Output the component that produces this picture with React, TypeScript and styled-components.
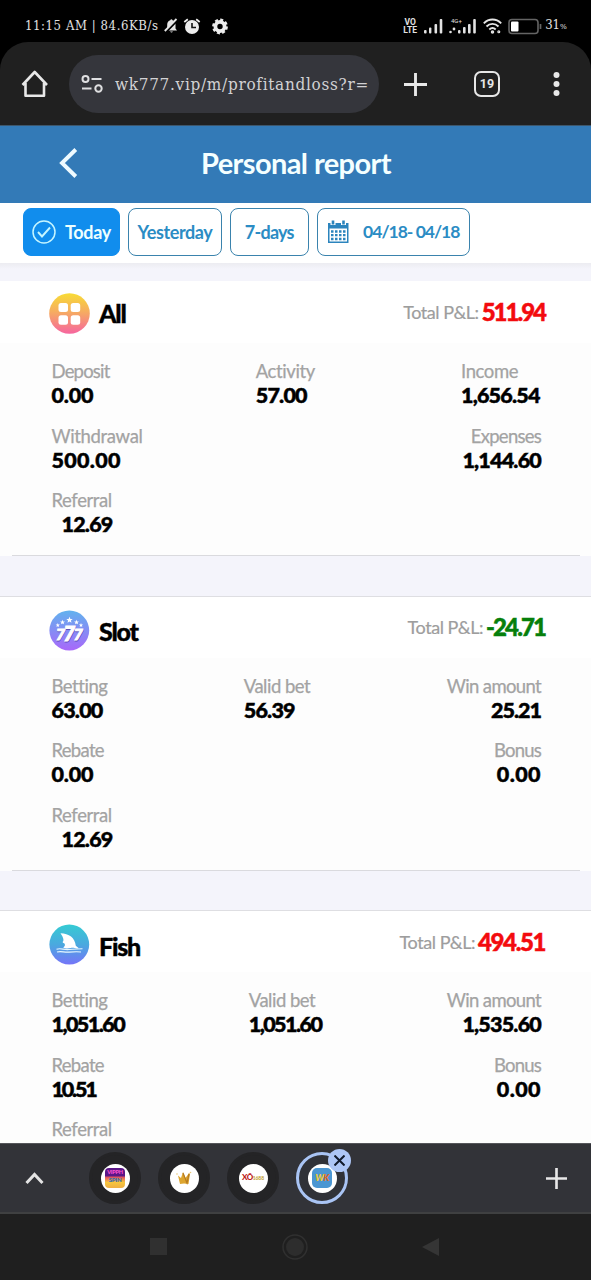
import React from "react";
import styled, { createGlobalStyle } from "styled-components";

const GlobalStyle = createGlobalStyle`
  * { box-sizing: border-box; }
  body { margin: 0; background: #000; font-family: Lato, "Open Sans", sans-serif; }
`;

const Screen = styled.div`
  width: 591px;
  height: 1280px;
  display: flex;
  flex-direction: column;
  overflow: hidden;
  background: #000;
`;

const StatusBar = styled.div`
  height: 42px;
  flex: none;
  display: flex;
  align-items: center;
  justify-content: space-between;
  padding: 10px 24px 0 25px;
  color: #e2e2e2;
`;

const StatusGroup = styled.div<{ $gap: number }>`
  display: flex;
  align-items: center;
  gap: ${(p) => p.$gap}px;
`;

const StatusText = styled.span<{ $track: number }>`
  font: 13px/18px "DejaVu Serif Condensed", "DejaVu Serif", serif;
  font-stretch: condensed;
  white-space: pre;
  letter-spacing: ${(p) => p.$track}px;
`;

const BatteryLevel = styled(StatusText)`
  margin-left: -3px;
`;

const Percent = styled.span`
  font-size: 8px;
`;

const VoLte = styled.span`
  display: flex;
  flex-direction: column;
  align-items: center;
  font: 700 8.5px/8.5px Roboto, sans-serif;
  width: 16px;
`;

const BrowserBar = styled.div`
  height: 83px;
  flex: none;
  display: flex;
  align-items: center;
  padding: 1px 0 0 21px;
  background: #202020;
  border-radius: 28px 28px 0 0;
`;

const UrlPill = styled.div`
  width: 310px;
  height: 58px;
  flex: none;
  margin: 0 25px 0 20px;
  padding-left: 12px;
  border-radius: 29px;
  background: #35363c;
  display: flex;
  align-items: center;
  gap: 11px;
`;

const Url = styled.span`
  font: 17px/24px "DejaVu Serif Condensed", "DejaVu Serif", serif;
  font-stretch: condensed;
  letter-spacing: 0.7px;
  color: #d2d2d4;
  white-space: nowrap;
`;

const TabCount = styled.div`
  width: 26px;
  height: 26px;
  flex: none;
  margin: 0 39px 0 47px;
  border: 2.6px solid #e6e6e6;
  border-radius: 7px;
  color: #e6e6e6;
  font: 700 12.5px/21px Roboto, sans-serif;
  text-align: center;
`;

const PageHeader = styled.header`
  height: 78px;
  flex: none;
  display: grid;
  grid-template-columns: 135px 322px 1fr;
  align-items: center;
  justify-items: center;
  padding-bottom: 4px;
  background: #337ab7;
  border-top: 1px solid #3d566b;
`;

const Title = styled.h1`
  margin: 0;
  font-size: 29px;
  line-height: 36px;
  font-weight: 700;
  letter-spacing: -0.6px;
  color: #f4ffff;
  white-space: nowrap;
`;

const Filters = styled.div`
  height: 60px;
  flex: none;
  display: flex;
  align-items: flex-start;
  gap: 8px;
  padding: 5px 23px 0;
  background: #fff;
`;

const FilterButton = styled.button<{
  $width: number;
  $active?: boolean;
  $gap?: number;
  $track?: number;
  $size?: number;
}>`
  width: ${(p) => p.$width}px;
  height: 48px;
  padding: 0;
  display: flex;
  align-items: center;
  justify-content: center;
  gap: ${(p) => p.$gap ?? 0}px;
  border: 1.3px solid ${(p) => (p.$active ? "#118ded" : "#3a83ad")};
  border-radius: 8px;
  background: ${(p) => (p.$active ? "#118ded" : "#fff")};
  color: ${(p) => (p.$active ? "#edffff" : "#2b8cc4")};
  font: 700 ${(p) => p.$size ?? 18}px/24px Lato, sans-serif;
  letter-spacing: ${(p) => p.$track ?? 0}px;
  white-space: nowrap;
`;

const Report = styled.main`
  height: 880px;
  flex: none;
  padding-top: 18px;
  overflow: hidden;
  background: linear-gradient(#ececf1, #f4f4fb 6px);
`;

const Card = styled.section`
  height: 275px;
  margin-bottom: 39.5px;
  background: #fdfdfd;
  border-top: 1px solid #dedee2;
  &:first-child { border-top-color: #fff; }
`;

const CardHead = styled.div<{ $lift?: boolean }>`
  height: 61px;
  display: flex;
  align-items: center;
  padding: ${(p) => (p.$lift ? 2 : 6)}px 46px 0 49px;
  background: #fff;
`;

const CardTitle = styled.h2<{ $lift?: boolean }>`
  flex: 1;
  margin: ${(p) => (p.$lift ? -2 : 2)}px 0 0 9px;
  font-size: 25px;
  line-height: 30px;
  font-weight: 900;
  letter-spacing: -1.2px;
  color: #000;
  -webkit-text-stroke: 0.4px #000;
`;

const Total = styled.div<{ $lift?: boolean }>`
  display: flex;
  align-items: center;
  gap: 3px;
  margin-bottom: ${(p) => (p.$lift ? 3 : 6)}px;
  color: #9d9d9d;
  font-size: 18px;
  line-height: 28px;
  letter-spacing: -0.45px;
  white-space: nowrap;
  -webkit-text-stroke: 0.2px #9d9d9d;
`;

const Amount = styled.strong<{ $gain: boolean; $track: number }>`
  font-size: 24px;
  font-weight: 900;
  letter-spacing: ${(p) => p.$track}px;
  color: ${(p) => (p.$gain ? "#f30b0e" : "#067f0b")};
  -webkit-text-stroke: 0.5px ${(p) => (p.$gain ? "#f30b0e" : "#067f0b")};
`;

const CardBody = styled.div`
  height: 213px;
  margin: 0 11px 0 12px;
  padding: 16px 39px 0 39.5px;
  border-bottom: 1px solid #dadade;
`;

const Row = styled.div`
  height: 64.5px;
  display: flex;
  justify-content: space-between;
`;

const Cell = styled.div<{ $width: number; $right?: boolean }>`
  width: ${(p) => p.$width}px;
  display: flex;
  flex-direction: column;
  align-items: ${(p) => (p.$right ? "flex-end" : "flex-start")};
  white-space: nowrap;
`;

const Label = styled.div<{ $track: number }>`
  height: 24px;
  font-size: 18.5px;
  line-height: 24px;
  letter-spacing: ${(p) => p.$track}px;
  color: #a3a3a3;
  -webkit-text-stroke: 0.25px #a3a3a3;
`;

const Value = styled.div<{ $indent?: boolean; $track: number }>`
  height: 24px;
  padding-left: ${(p) => (p.$indent ? 10 : 0)}px;
  font-size: 21.5px;
  line-height: 24px;
  font-weight: 900;
  letter-spacing: ${(p) => p.$track}px;
  color: #000;
  -webkit-text-stroke: 0.5px #000;
`;

const TabStrip = styled.div`
  height: 71px;
  flex: none;
  display: flex;
  align-items: center;
  padding: 0 24px 0 24px;
  background: #323338;
  border-top: 1px solid #55565a;
  border-bottom: 2px solid #3f4041;
`;

const TabList = styled.div`
  flex: 1;
  display: flex;
  gap: 17px;
  margin-left: 44px;
`;

const TabBubble = styled.div<{ $selected?: boolean }>`
  position: relative;
  width: 52px;
  height: 52px;
  display: grid;
  place-items: center;
  border-radius: 50%;
  border: 3px solid ${(p) => (p.$selected ? "#a9c4f4" : "#242426")};
  background: ${(p) => (p.$selected ? "#303238" : "#242426")};
`;

const Favicon = styled.div`
  width: 29px;
  height: 29px;
  display: grid;
  place-items: center;
  border-radius: 50%;
  background: #fff;
`;

const PromoIcon = styled.div`
  width: 20px;
  height: 20px;
  border-radius: 4px;
  display: flex;
  flex-direction: column;
  align-items: center;
  background: linear-gradient(#5b1687 0 38%, #e65c5c 48%, #f6c63e 72%, #efaf43);
  color: #ff54d0;
  font: 900 5.5px/8px Lato, sans-serif;
  letter-spacing: -0.2px;
`;

const PromoLower = styled.span`
  color: #2c6fb4;
  font-size: 6px;
  line-height: 7px;
`;

const XoLogo = styled.span`
  font: 900 8px/9px Lato, sans-serif;
  letter-spacing: -0.5px;
  color: #bd2118;
  white-space: nowrap;
`;

const XoTail = styled.span`
  font-size: 5px;
  letter-spacing: -0.1px;
  color: #c4a33b;
`;

const WkLogo = styled.div`
  width: 20px;
  height: 20px;
  border-radius: 5px;
  background: #4b96d2;
  color: #f6cb32;
  font: italic 900 9px/20px Lato, sans-serif;
  text-align: center;
  letter-spacing: -0.5px;
`;

const WkTail = styled.span`
  color: #e56a20;
`;

const CloseBadge = styled.div`
  position: absolute;
  top: -6px;
  right: -6px;
  width: 23px;
  height: 23px;
  display: grid;
  place-items: center;
  border-radius: 50%;
  background: #adc6f6;
`;

const NavBar = styled.nav`
  flex: 1;
  display: flex;
  align-items: center;
  justify-content: space-between;
  padding: 0 152px 1px 150px;
  background: #1f1f1f;
`;

const Icon = styled.svg`
  display: block;
  flex: none;
`;

const SingleSignal = () => (
  <Icon width="19" height="18" viewBox="0 0 19 18" fill="#e2e2e2">
    <rect x="0" y="13" width="2.6" height="3.4" rx="1" />
    <rect x="5" y="10.5" width="2.4" height="5.9" rx="1" />
    <rect x="10.5" y="7" width="2.6" height="9.4" rx="1" />
    <rect x="15.7" y="2" width="2.6" height="14.4" rx="1" />
  </Icon>
);

const DualSignal = () => (
  <Icon width="28" height="18" viewBox="0 0 28 18" fill="#e2e2e2">
    <text x="2" y="5.5" fontFamily="Roboto" fontSize="6">4G+</text>
    <circle cx="1.5" cy="15" r="1.3" />
    <circle cx="5" cy="12" r="1.4" />
    <rect x="9" y="13" width="2.5" height="3.4" rx="1" />
    <rect x="14" y="10" width="2.6" height="6.4" rx="1" />
    <rect x="19" y="7" width="2.6" height="9.4" rx="1" />
    <rect x="24.2" y="2" width="2.6" height="14.4" rx="1" />
  </Icon>
);

const AllIcon = () => (
  <Icon width="41" height="41" viewBox="0 0 41 41">
    <defs>
      <linearGradient id="all" x2="0" y2="1">
        <stop stopColor="#f8dc35" />
        <stop offset="0.45" stopColor="#f6ad60" />
        <stop offset="1" stopColor="#f6659f" />
      </linearGradient>
    </defs>
    <circle cx="20.5" cy="20.5" r="20.3" fill="url(#all)" />
    <g fill="#fff">
      <rect x="9.5" y="10" width="9.5" height="9" rx="2.5" />
      <rect x="21.7" y="10" width="9.5" height="9" rx="2.5" />
      <rect x="9.5" y="22.2" width="9.5" height="9.5" rx="2.5" />
      <rect x="21.7" y="22.2" width="9.5" height="9.5" rx="2.5" />
    </g>
  </Icon>
);

const star = "M0-3.2.9-1 3.2-.9 1.4.6 2 2.8 0 1.6-2 2.8-1.4.6-3.2-.9-.9-1Z";

const SlotIcon = () => (
  <Icon width="41" height="41" viewBox="0 0 41 41">
    <defs>
      <linearGradient id="slot" x2="0" y2="1">
        <stop stopColor="#62b2ee" />
        <stop offset="1" stopColor="#a868fa" />
      </linearGradient>
    </defs>
    <circle cx="20.3" cy="20.5" r="19.9" fill="url(#slot)" />
    <g fill="#fff">
      <path d={star} transform="translate(20.5 10)" />
      <path d={star} transform="translate(13.5 12.2) scale(.75)" />
      <path d={star} transform="translate(27.5 12.2) scale(.75)" />
      <path d={star} transform="translate(8.8 15.2) scale(.65)" />
      <path d={star} transform="translate(32 15.2) scale(.65)" />
    </g>
    <g fontFamily="Lato" fontWeight="900" fontStyle="italic" textAnchor="middle">
      <g fill="#5b4fb8" stroke="#5b4fb8" strokeWidth="0.8">
        <text x="11.8" y="31.2" fontSize="15.5">7</text>
        <text x="29.8" y="31.2" fontSize="15.5">7</text>
        <text x="20.8" y="32" fontSize="20">7</text>
      </g>
      <g fill="#fff" stroke="#fff" strokeWidth="1">
        <text x="11.5" y="30" fontSize="15.5">7</text>
        <text x="29.3" y="30" fontSize="15.5">7</text>
        <text x="20.4" y="31" fontSize="20">7</text>
      </g>
    </g>
  </Icon>
);

const FishIcon = () => (
  <Icon width="41" height="41" viewBox="0 0 41 41">
    <defs>
      <linearGradient id="fish" x2="0" y2="1">
        <stop stopColor="#35cbd3" />
        <stop offset="0.5" stopColor="#4aa9df" />
        <stop offset="1" stopColor="#7575f8" />
      </linearGradient>
    </defs>
    <circle cx="20.3" cy="20.5" r="19.9" fill="url(#fish)" />
    <path d="M11.5 9.2C20 9.400 26 13.500 26.800 21.800c1 1 2 1.700 3 2.400-3.300.8-5-.9-8-.2-3.500.900-5 .4-7.600-.5 1.800-1 2.300-3 1-4.200-1.300-.4-2-1-1.300-1.800 1-.8.8-3.700-2.400-8.300Z" fill="#fff" />
    <path d="M7.500 25.200c5-1.400 7 .9 12.500.3 5-.8 8-.4 13.500-.7M8 28c4-1.200 7 .5 12 .1s8-.6 12-.1" fill="none" stroke="#e8f8ff" strokeWidth="1.100" />
  </Icon>
);

const PlusIcon = ({ size }: { size: number }) => (
  <Icon width={size} height={size} viewBox="0 0 24 24" stroke="#e8e8e8" strokeWidth="3">
    <path d="M12 0V24M0 12H24" />
  </Icon>
);

type CellData = {
  label: string;
  value: string;
  width: number;
  labelTrack?: number;
  valueTrack?: number;
  right?: boolean;
  indent?: boolean;
};
type CardData = {
  title: string;
  icon: React.ReactNode;
  total: string;
  totalTrack: number;
  rows: CellData[][];
};

const referral: CellData = { label: "Referral", value: "12.69", width: 62, labelTrack: -0.4, indent: true };

const cards: CardData[] = [
  {
    title: "All",
    icon: <AllIcon />,
    total: "511.94",
    totalTrack: -2,
    rows: [
      [
        { label: "Deposit", value: "0.00", width: 59, labelTrack: -0.8, valueTrack: -0.2 },
        { label: "Activity", value: "57.00", width: 60 },
        { label: "Income", value: "1,656.54", width: 80 },
      ],
      [
        { label: "Withdrawal", value: "500.00", width: 91, labelTrack: -0.35, valueTrack: 0.3 },
        { label: "Expenses", value: "1,144.60", width: 80, labelTrack: -0.75, right: true },
      ],
      [referral],
    ],
  },
  {
    title: "Slot",
    icon: <SlotIcon />,
    total: "-24.71",
    totalTrack: -1.9,
    rows: [
      [
        { label: "Betting", value: "63.00", width: 57, labelTrack: -0.45 },
        { label: "Valid bet", value: "56.39", width: 67, labelTrack: -0.5 },
        { label: "Win amount", value: "25.21", width: 95, labelTrack: -0.65, valueTrack: -1, right: true },
      ],
      [
        { label: "Rebate", value: "0.00", width: 53, labelTrack: -0.7, valueTrack: -0.2 },
        { label: "Bonus", value: "0.00", width: 47, labelTrack: -0.8, valueTrack: 0.4, right: true },
      ],
      [referral],
    ],
  },
  {
    title: "Fish",
    icon: <FishIcon />,
    total: "494.51",
    totalTrack: -1.4,
    rows: [
      [
        { label: "Betting", value: "1,051.60", width: 74, labelTrack: -0.45, valueTrack: -1.55 },
        { label: "Valid bet", value: "1,051.60", width: 74, labelTrack: -0.5, valueTrack: -1.55 },
        { label: "Win amount", value: "1,535.60", width: 95, labelTrack: -0.65, right: true },
      ],
      [
        { label: "Rebate", value: "10.51", width: 53, labelTrack: -0.7, valueTrack: -2.2 },
        { label: "Bonus", value: "0.00", width: 47, labelTrack: -0.8, valueTrack: 0.4, right: true },
      ],
      [referral],
    ],
  },
];

export default function App() {
  return (
    <Screen>
      <GlobalStyle />
      <StatusBar>
        <StatusGroup $gap={5}>
          <StatusText $track={0.58}>11:15 AM | 84.6KB/s</StatusText>
          <Icon width="14" height="16" viewBox="0 0 14 16">
            <path d="M1.500 12.500h11.500l-1.500-2V6.500C11.500 4 9.800 2.700 8.500 2.300 8.300.8 6.500.8 6.300 2.300 4.500 2.800 3.200 4.200 3.200 6.500v4ZM6 13.500h3q-1.500 2.200-3 0Z" fill="#e6e6e6" />
            <path d="M13.800 2 1.500 14.500" stroke="#000" strokeWidth="2.200" />
            <path d="M12.500 1 .8 13" stroke="#e6e6e6" strokeWidth="1.800" />
          </Icon>
          <Icon width="18" height="17" viewBox="0 0 18 17">
            <circle cx="9" cy="9" r="7" fill="#ededed" />
            <path d="m1.300 4 3.500-2.800M16.700 4l-3.500-2.800" stroke="#ededed" strokeWidth="1.800" />
            <path d="M9 5v4.500h4" fill="none" stroke="#111" strokeWidth="1.600" />
          </Icon>
          <Icon width="24" height="17" viewBox="-14 -8.500 24 17">
            <circle r="4.600" fill="none" stroke="#ededed" strokeWidth="3.800" />
            <circle r="6.700" fill="none" stroke="#ededed" strokeWidth="2.400" strokeDasharray="3 2.262" />
          </Icon>
        </StatusGroup>
        <StatusGroup $gap={6}>
          <VoLte>
            <span>VO</span>
            <span>LTE</span>
          </VoLte>
          <SingleSignal />
          <DualSignal />
          <Icon width="19" height="16" viewBox="0 0 19 16" fill="none" stroke="#e6e6e6" strokeWidth="1.900">
            <path d="M.8 5.300c5-5 12.400-5 17.400 0M3.500 8.500c3.500-3.500 8.500-3.500 12 0M6.300 11.500c2-1.800 4.400-1.800 6.400 0" />
            <circle cx="9.500" cy="14" r=".8" />
            <circle cx="15.800" cy="13.800" r=".6" />
          </Icon>
          <Icon width="34" height="17" viewBox="0 0 34 17">
            <rect x="1" y="1.500" width="29" height="14" rx="3" fill="none" stroke="#646464" strokeWidth="1.600" />
            <rect x="3" y="3.500" width="7.500" height="10" rx="1" fill="#fff" />
            <path d="M32.500 6v5" stroke="#646464" strokeWidth="1.700" />
          </Icon>
          <BatteryLevel $track={0.05}>31<Percent>%</Percent></BatteryLevel>
        </StatusGroup>
      </StatusBar>

      <BrowserBar>
        <Icon width="28" height="28" viewBox="0 0 28 28" fill="none" stroke="#e8e8e8" strokeWidth="2.600" strokeLinejoin="round">
          <path d="M4.500 13v12.800h18.500V13M1.500 15 13.700 2 26 15" />
        </Icon>
        <UrlPill>
          <Icon width="23" height="20" viewBox="0 0 23 20" fill="none" stroke="#dfdfe1" strokeWidth="2">
            <circle cx="4.500" cy="5" r="3" />
            <path d="M10.500 5h10M1 14.500h9.500" />
            <circle cx="17.500" cy="14.500" r="3.200" />
          </Icon>
          <Url>wk777.vip/m/profitandloss?r=</Url>
        </UrlPill>
        <PlusIcon size={23} />
        <TabCount>19</TabCount>
        <Icon width="24" height="24" viewBox="0 0 24 24" fill="#e8e8e8">
          <circle cx="17.500" cy="3" r="3" />
          <circle cx="17.500" cy="12" r="3" />
          <circle cx="17.500" cy="21" r="3" />
        </Icon>
      </BrowserBar>

      <PageHeader>
        <Icon width="20" height="32" viewBox="0 0 20 32" fill="none" stroke="#eefaff" strokeWidth="3.900">
          <path d="M17.800 2.500 4 16 17.800 29.500" />
        </Icon>
        <Title>Personal report</Title>
      </PageHeader>

      <Filters>
        <FilterButton $width={97} $gap={9} $active $track={-0.35}>
          <Icon width="24" height="24" viewBox="0 0 24 24" fill="none" stroke="#c5f5ff" strokeWidth="1.500">
            <circle cx="12" cy="12" r="11" />
            <path d="m6 12 4 4.500L18 7.500" strokeWidth="1.900" />
          </Icon>
          Today
        </FilterButton>
        <FilterButton $width={94} $track={-0.4}>Yesterday</FilterButton>
        <FilterButton $width={78.5} $track={-0.75}>7-days</FilterButton>
        <FilterButton $width={153.5} $gap={13} $size={17.5} $track={-1}>
          <Icon width="23" height="24" viewBox="0 0 23 24">
            <path d="M1 3h20.500v20H1Z" fill="#2b84bd" />
            <path d="M6 0v5M16.500 0v5" stroke="#fff" strokeWidth="5" />
            <path d="M6 .5v4M16.500.5v4" stroke="#2b84bd" strokeWidth="2.600" />
            <path d="M2.500 8.500h17.500v13H2.500Z" fill="#fff" />
            <path d="M4 11.500h15M4 15.200h15M4 19h15" stroke="#2b84bd" strokeWidth="2.300" strokeDasharray="2.500 1.500" />
          </Icon>
          04/18- 04/18
        </FilterButton>
      </Filters>

      <Report>
        {cards.map((card, i) => (
          <Card key={card.title}>
            <CardHead $lift={i === 0}>
              {card.icon}
              <CardTitle $lift={i === 0}>{card.title}</CardTitle>
              <Total $lift={i === 0}>
                Total P&amp;L:
                <Amount $gain={!card.total.startsWith("-")} $track={card.totalTrack}>{card.total}</Amount>
              </Total>
            </CardHead>
            <CardBody>
              {card.rows.map((row, r) => (
                <Row key={r}>
                  {row.map((cell) => (
                    <Cell key={cell.label} $width={cell.width} $right={cell.right}>
                      <Label $track={cell.labelTrack ?? -0.4}>{cell.label}</Label>
                      <Value $indent={cell.indent} $track={cell.valueTrack ?? -0.8}>{cell.value}</Value>
                    </Cell>
                  ))}
                </Row>
              ))}
            </CardBody>
          </Card>
        ))}
      </Report>

      <TabStrip>
        <Icon width="21" height="14" viewBox="0 0 21 14" fill="none" stroke="#e4e4e4" strokeWidth="3">
          <path d="m2.500 12 8-8.500 8 8.500" />
        </Icon>
        <TabList>
          <TabBubble>
            <Favicon>
              <PromoIcon>
                VIPPH
                <PromoLower>SPIN</PromoLower>
              </PromoIcon>
            </Favicon>
          </TabBubble>
          <TabBubble>
            <Favicon>
              <Icon width="18" height="16" viewBox="0 0 18 16">
                <path d="M3 5.500 6 8l2-6 2.500 6L14 3l1 1-1.500 10c-3-.8-6-.8-8.500 0Z" fill="#dda52f" />
                <path d="m8 3 4 10 2-9" fill="none" stroke="#b77a20" strokeWidth="1.200" />
                <circle cx="2" cy="4" r=".8" fill="#e8c879" />
                <circle cx="15.500" cy="2.500" r=".8" fill="#e8c879" />
              </Icon>
            </Favicon>
          </TabBubble>
          <TabBubble>
            <Favicon>
              <XoLogo>XÔ<XoTail>1688</XoTail></XoLogo>
            </Favicon>
          </TabBubble>
          <TabBubble $selected>
            <Favicon>
              <WkLogo>W<WkTail>K</WkTail></WkLogo>
            </Favicon>
            <CloseBadge>
              <Icon width="11" height="11" viewBox="0 0 11 11" stroke="#111a2c" strokeWidth="2">
                <path d="m.5.500 10 10M10.500.500l-10 10" />
              </Icon>
            </CloseBadge>
          </TabBubble>
        </TabList>
        <PlusIcon size={21} />
      </TabStrip>

      <NavBar>
        <Icon width="17" height="17" viewBox="0 0 17 17">
          <rect width="17" height="17" fill="#303030" />
        </Icon>
        <Icon width="26" height="26" viewBox="0 0 26 26">
          <circle cx="13" cy="13" r="12" fill="none" stroke="#303030" strokeWidth="1.500" />
          <circle cx="13" cy="13" r="9" fill="#2d2d2d" />
        </Icon>
        <Icon width="17" height="18" viewBox="0 0 17 18">
          <path d="M17 0v18L0 9Z" fill="#353535" />
        </Icon>
      </NavBar>
    </Screen>
  );
}
